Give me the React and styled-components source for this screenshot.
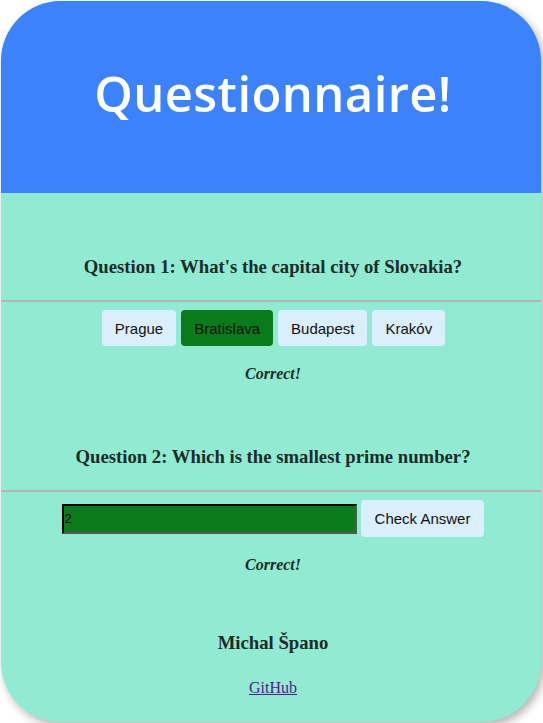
import React, { useState } from 'react'
import styled, { createGlobalStyle } from 'styled-components'

const GlobalStyle = createGlobalStyle`
    body{
        margin:0;
        background:white;
        font-family:"Liberation Serif", "Times New Roman", serif;
    }
`

const Card = styled.div`
    margin:1px 2px 1px 1px;
    height:721px;
    border-radius:60px;
    overflow:hidden;
    background:#90ebd2;
    box-shadow:3px 4px 10px rgba(0,0,0,0.3);
    display:flex;
    flex-direction:column;
`

const Header = styled.header`
    height:192px;
    background:#3b82fc;
    display:flex;
    align-items:center;
    justify-content:center;
    padding:0 0 8px 4px;
    box-sizing:border-box;
    h1{
        margin:0;
        color:white;
        font-family:"Open Sans", sans-serif;
        font-weight:600;
        font-size:49px;
        letter-spacing:0.4px;
    }
`

const Question = styled.section`
    text-align:center;
    h3{
        margin:63px 0 22px;
        padding-left:4px;
        font-size:18.72px;
        line-height:22px;
        color:#1f2a2a;
    }
`

const Rule = styled.hr`
    margin:0;
    border:none;
    border-top:2px solid #b5b5b5;
`

const Options = styled.div`
    display:flex;
    justify-content:center;
    gap:5px;
    margin-top:8px;
    padding-left:5px;
`

const Option = styled.button`
    height:36px;
    padding:0 13px;
    border:none;
    border-radius:4px;
    font-family:"Liberation Sans", Arial, sans-serif;
    font-size:15px;
    color:#111;
    background:${p => (p.$picked ? '#0b7a1b' : '#dbeefc')};
`

const Result = styled.p`
    margin:19px 0 0;
    padding-left:4px;
    font-style:italic;
    font-weight:bold;
    font-size:16px;
    line-height:18px;
    color:#1f2a2a;
`

const AnswerRow = styled.div`
    display:flex;
    justify-content:center;
    align-items:center;
    gap:4px;
    margin-top:8px;
    padding-left:4px;
`

const AnswerInput = styled.input`
    width:295px;
    height:30px;
    box-sizing:border-box;
    border:2px inset #555;
    background:#0b7a1b;
    font-family:"Liberation Sans", Arial, sans-serif;
    font-size:13px;
    padding:0 1px;
    color:#000;
    outline:none;
`

const CheckButton = styled(Option)`
    height:37px;
    padding:0 14px;
`

const Footer = styled.footer`
    text-align:center;
    margin-top:58px;
    padding-left:4px;
    h3{
        margin:0;
        font-size:18.72px;
        line-height:22px;
        color:#1f2a2a;
    }
    a{
        display:inline-block;
        margin-top:25px;
        font-size:16px;
        line-height:18px;
        color:#551a8b;
    }
`

const cities = ['Prague', 'Bratislava', 'Budapest', 'Krakóv']

function App() {
    const [picked, setPicked] = useState('Bratislava')
    const [answer, setAnswer] = useState('2')

    return (
        <>
            <GlobalStyle />
            <Card>
                <Header>
                    <h1>Questionnaire!</h1>
                </Header>
                <Question>
                    <h3>Question 1: What's the capital city of Slovakia?</h3>
                    <Rule />
                    <Options>
                        {cities.map(city => (
                            <Option key={city} $picked={picked === city} onClick={() => setPicked(city)}>
                                {city}
                            </Option>
                        ))}
                    </Options>
                    <Result>Correct!</Result>
                </Question>
                <Question>
                    <h3>Question 2: Which is the smallest prime number?</h3>
                    <Rule />
                    <AnswerRow>
                        <AnswerInput value={answer} onChange={e => setAnswer(e.target.value)} />
                        <CheckButton>Check Answer</CheckButton>
                    </AnswerRow>
                    <Result>Correct!</Result>
                </Question>
                <Footer>
                    <h3>Michal Špano</h3>
                    <a href="#github">GitHub</a>
                </Footer>
            </Card>
        </>
    )
}

export default App
